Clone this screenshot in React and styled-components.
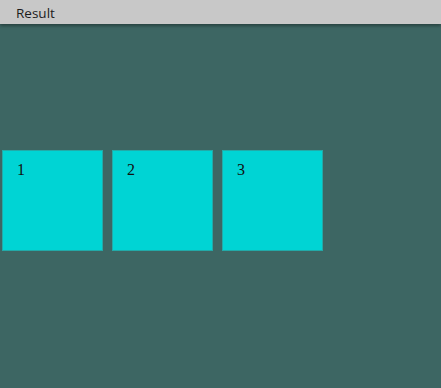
import React from 'react';
import styled, { createGlobalStyle } from 'styled-components';

const GlobalStyle = createGlobalStyle`
  html, body {
    margin: 0;
    padding: 0;
    height: 100%;
    background: #3d6663;
  }
  #root {
    min-height: 100%;
  }
`;

const Page = styled.div`
  display: flex;
  flex-direction: column;
  min-height: 388px;
  background: #3d6663;
`;

const Bar = styled.header`
  position: relative;
  z-index: 1;
  box-sizing: border-box;
  height: 24px;
  padding: 1px 0 0 16px;
  display: flex;
  align-items: center;
  background: #c8c8c8;
  box-shadow: 0 2px 3px rgba(0, 0, 0, 0.35);
  font-family: 'Open Sans', sans-serif;
  font-size: 13.5px;
  color: #1c1c1c;
`;

const Row = styled.div`
  display: flex;
  gap: 9px;
  padding: 126px 0 0 2px;
`;

const Box = styled.div`
  box-sizing: border-box;
  width: 101px;
  height: 101px;
  padding: 10px 14px;
  background: #00d4d4;
  border: 1px solid #22aaa8;
  font-family: 'Liberation Serif', serif;
  font-size: 16px;
  color: #111;
`;

const App = () => (
  <Page>
    <GlobalStyle />
    <Bar>Result</Bar>
    <Row>
      {[1, 2, 3].map(n => (
        <Box key={n}>{n}</Box>
      ))}
    </Row>
  </Page>
);

export default App;
